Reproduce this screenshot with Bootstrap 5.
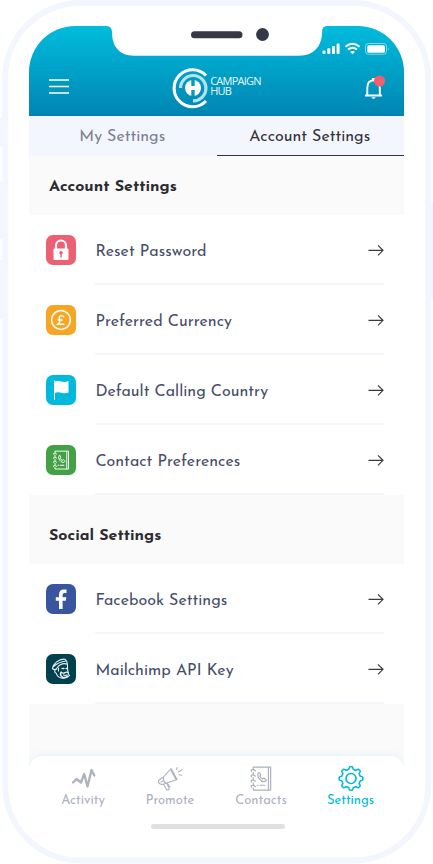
<!DOCTYPE html>
<html lang="en">
<head>
<meta charset="utf-8">
<meta name="viewport" content="width=device-width, initial-scale=1">
<title>Campaign Hub – Account Settings</title>
<link href="https://cdn.jsdelivr.net/npm/bootstrap@5.3.0/dist/css/bootstrap.min.css" rel="stylesheet">
<style>
  body { font-family: "Josefin Sans", Lato, sans-serif; background: #fff; overflow: hidden; }
  svg { display: block; flex: none; }
  .device { width: 433px; height: 864px; padding: 26px 29px 0; }
  .device-frame { left: 0; top: 0; z-index: -1; }
  .screen { width: 375px; height: 804px; border-radius: 46px 46px 0 0; }
  .app-header { height: 90px; background: linear-gradient(#00bcdc, #0085b2); padding: 0 19px 0 20px; }
  .notch { left: 77px; top: 0; }
  .status-icons { left: 293px; top: 16px; }
  .header-row { padding-top: 39px; height: 84px; }
  .brand-name { font: 11px/10px "Open Sans", sans-serif; letter-spacing: -.75px; color: #e8f7fb; font-weight: 400; margin-top: -3px; }
  .settings-tabs { height: 40px; background: #f3f6ff; }
  .settings-tabs .nav-link { color: #7c8090; font-size: 16px; line-height: 18px; padding: 12px 1px 9px 0; border-radius: 0; border-bottom: 1px solid transparent; width: 187.5px; }
  .settings-tabs .nav-link.active { color: #333; border-color: #333; }
  .section-title { height: 59px; background: #fafafa; font-size: 16px; font-weight: 700; color: #2c2c30; padding: 4px 20px 0; margin: 0; }
  .section-title + .list-group + .section-title { height: 69px; padding-top: 14px; }
  .setting { height: 70px; padding: 0 20px 0 17px; color: #464d68; font-size: 16px; }
  .setting-body { height: 70px; margin-left: 19px; border-bottom: 2px solid #f5f6fc; padding-top: 2px; }
  .setting-body span { padding: 3px 0 0 .4px; letter-spacing: .02px; }
  .tail { background: #fafafa; height: 66px; }
  .tab-bar { height: 74px; margin-top: -14px; border-radius: 14px 14px 0 0; box-shadow: 0 -2px 7px #e4f4f7; background: #fff; padding-top: 9px; position: relative; }
  .tab-item { color: #adb1c0; font-size: 13px; line-height: 17px; }
  .tab-item.current { color: #00b8d9; }
  .t-activity { margin-left: 24px; width: 60px; }
  .t-promote { margin-left: 26px; width: 62px; }
  .t-contacts { margin-left: 29px; width: 62px; }
  .t-settings { margin-left: 28.500px; width: 60px; }
  .home-bar { width: 134px; height: 5px; border-radius: 3px; background: #e0e0e0; margin: -6px auto 0; position: relative; left: 1px; }
</style>
<script src="https://cdn.jsdelivr.net/npm/bootstrap@5.3.0/dist/js/bootstrap.bundle.min.js"></script>
</head>
<body>
<svg width="0" height="0" class="position-absolute">
  <symbol id="arrow" viewBox="0 0 16 12"><path d="M.5 6.300H15M10 1.300l5 5-5 5" fill="none" stroke="#3a3a3d" stroke-width="1.15"/></symbol>
  <symbol id="book" viewBox="0 0 24 28">
    <g fill="none" stroke="currentColor" stroke-width="1.25" stroke-linecap="round" stroke-linejoin="round">
      <path d="M4 4V2.2h18V26H4v-2M4 7.5v2M4 13v2M4 18.500v2M19.700 2.500V26"/>
      <path d="M2.200 6.500c-1.500-2 1.800-2.500 4-.5M2.200 12c-1.500-2 1.800-2.500 4-.5M2.200 17.500c-1.500-2 1.800-2.500 4-.5M2.200 23c-1.500-2 1.800-2.500 4-.5"/>
      <path d="M9.500 8.200c-2.500 4 2.500 9.500 6.500 9.100l1.500-1.500-2.400-2.300-1.500 1c-1.300-.6-2.300-1.600-2.800-3l1-1.100-1.200-2.300zM8 21h1m2 0h5"/>
    </g>
  </symbol>
</svg>

<main class="device position-relative">
  <svg class="device-frame position-absolute" width="433" height="864" fill="none">
    <rect x="5.300" y="3" width="423" height="857.500" rx="75" stroke="#f3f6ff" stroke-width="6"/>
    <path d="M1.200 118v29M1.200 181v58M1.200 260v59M432 202v96" stroke="#f3f6ff" stroke-width="2.500"/>
  </svg>

  <div class="screen overflow-hidden">
    <header class="app-header position-relative">
      <svg class="notch position-absolute" width="222" height="31">
        <path d="M0 0H221Q216 0 216 6C216 20 208 29.700 193 29.700H28C13 29.700 6 20 6 6Q6 0 0 0Z" fill="#fff"/>
        <rect x="85" y="5.300" width="51.500" height="7" rx="3.500" fill="#353945"/>
        <circle cx="156.500" cy="8.500" r="6.400" fill="#353945"/>
      </svg>
      <svg class="status-icons position-absolute" width="68" height="14" fill="#fff">
        <rect x=".5" y="8.500" width="3" height="3.500" rx="1"/><rect x="5.300" y="6.300" width="3" height="5.700" rx="1"/><rect x="10" y="4" width="3" height="8" rx="1"/><rect x="14.600" y="1.500" width="3" height="10.500" rx="1"/>
        <path d="M23.500 4.700Q30.500-1 37.500 4.700M26 7.600Q30.500 4 35 7.600" fill="none" stroke="#fff" stroke-width="1.900"/>
        <path d="M28 9.800Q30.500 8 33 9.800L30.500 12.300Z"/>
        <rect x="43.500" y="1.500" width="21" height="10.800" rx="3" fill="none" stroke="#fff" stroke-opacity=".5"/>
        <rect x="45.300" y="3.200" width="17.600" height="7.500" rx="1.500"/>
        <path d="M66.200 5.200q1.500 1.800 0 3.600z" opacity=".6"/>
      </svg>
      <div class="header-row d-flex align-items-center justify-content-between">
        <svg width="20" height="17" stroke="#fff" stroke-width="1.600"><path d="M0 1H20M0 7.500H20M0 14H20"/></svg>
        <div class="d-flex align-items-center">
          <svg width="38" height="42" fill="none">
            <path d="M34 8.500A18.500 18.500 0 1 0 34 34" stroke="#fff" stroke-width="3.100"/>
            <path d="M8.500 21A12.700 12.700 0 1 1 21 33.900" stroke="#b5e1ef" stroke-width="3.200"/>
            <circle cx="21" cy="21" r="8" fill="#fff"/>
            <path d="M21 13v6M21 23v6" stroke="#0699c1" stroke-width="3.400"/>
          </svg>
          <div class="brand-name"><div>CAMPAIGN</div><div>HUB</div></div>
        </div>
        <svg width="21" height="26">
          <path d="M1 20.500H18M3.300 20V13Q3.300 5.500 9.500 5.200Q15.800 5.500 15.800 13V20" fill="none" stroke="#fff" stroke-width="1.900"/>
          <path d="M7.300 22.300h4.400q-2.200 3-4.400 0zM8 5V3h3v2z" fill="#fff"/>
          <circle cx="15.500" cy="6" r="5.600" fill="#ef5f70"/>
        </svg>
      </div>
    </header>

    <nav class="nav settings-tabs flex-nowrap text-center">
      <a class="nav-link" href="#"><span>My Settings</span></a>
      <a class="nav-link active" href="#"><span>Account Settings</span></a>
    </nav>

    <h2 class="section-title d-flex align-items-center">Account Settings</h2>
    <div class="list-group list-group-flush">
      <div class="setting d-flex align-items-center">
        <svg width="30" height="30"><rect width="30" height="30" rx="7" fill="#ed5f72"/><path d="M10 15v-4.500a5 5 0 0 1 10 0V15" fill="none" stroke="#fff" stroke-width="2.200"/><rect x="7.500" y="13.500" width="15" height="11.500" rx="1" fill="#fff"/><path d="M15 22.500v-4" stroke="#ed5f72" stroke-width="1.500"/><circle cx="15" cy="17.800" r="1.800" fill="#ed5f72"/></svg>
        <div class="setting-body flex-grow-1 d-flex align-items-center justify-content-between"><span>Reset Password</span><svg width="16" height="12"><use href="#arrow"/></svg></div>
      </div>
      <div class="setting d-flex align-items-center">
        <svg width="30" height="30"><rect width="30" height="30" rx="7" fill="#f5a623"/><circle cx="15" cy="15" r="9.400" fill="none" stroke="#fff" stroke-width="1.500"/><path d="M18 12.300q-1.300-2.300-3.500-1.400-2 .9-.9 3.400.8 3-1.600 4.900h6.400M11.700 15h5" fill="none" stroke="#fff" stroke-width="1.500"/></svg>
        <div class="setting-body flex-grow-1 d-flex align-items-center justify-content-between"><span>Preferred Currency</span><svg width="16" height="12"><use href="#arrow"/></svg></div>
      </div>
      <div class="setting d-flex align-items-center">
        <svg width="30" height="30"><rect width="30" height="30" rx="7" fill="#00b9db"/><path d="M8.500 5.500V25" stroke="#fff" stroke-width="1"/><path d="M8.500 6.500q3.600-1.200 7 0t7-.5V17.500q-3.400 1.300-7 .2t-7 .3z" fill="#fff"/></svg>
        <div class="setting-body flex-grow-1 d-flex align-items-center justify-content-between"><span>Default Calling Country</span><svg width="16" height="12"><use href="#arrow"/></svg></div>
      </div>
      <div class="setting d-flex align-items-center">
        <svg width="30" height="30" color="#fff"><rect width="30" height="30" rx="7" fill="#43a047"/><use href="#book" x="6" y="4.500" width="18" height="21"/></svg>
        <div class="setting-body flex-grow-1 d-flex align-items-center justify-content-between"><span>Contact Preferences</span><svg width="16" height="12"><use href="#arrow"/></svg></div>
      </div>
    </div>

    <h2 class="section-title d-flex align-items-center">Social Settings</h2>
    <div class="list-group list-group-flush">
      <div class="setting d-flex align-items-center">
        <svg width="30" height="30"><rect width="30" height="30" rx="7" fill="#3a55a0"/><path d="M13 25v-8.300H9.800v-3.400H13v-2.600q0-5.200 5-5.200h2.500v3.400h-2q-1.900 0-1.900 2v2.400h3.700l-.5 3.400h-3.200V25z" fill="#fff"/></svg>
        <div class="setting-body flex-grow-1 d-flex align-items-center justify-content-between"><span>Facebook Settings</span><svg width="16" height="12"><use href="#arrow"/></svg></div>
      </div>
      <div class="setting d-flex align-items-center">
        <svg width="30" height="30"><rect width="30" height="30" rx="7" fill="#00404f"/>
          <g fill="none" stroke="#e2edef" stroke-width="1.100" stroke-linecap="round" stroke-linejoin="round"><path d="M6.500 14.500C7 10 13 4.500 19 5.200q2.200 1.500 2.400 5C17 8.700 13.500 10.500 11 14q-2 3-4.500.5zM7.500 12.500Q12.500 8 20 7"/><path d="M10.800 15c-2.500.3-3 3.500-.5 4.300 1.500 5.500 9.500 6.700 13.200 2.200-1.500-1-1.300-2.500-1.300-3.500-1-1.500-.5-4.500-.8-7.500M12.500 14v3"/><path d="M15 18.300q-1.500 3 1.800 5.200 3 .5 5-1.500" stroke-width="1.600"/><path d="M15 18.300q2 1.500 4 .3t3.200.2M16 14.500h2M20 14.500h1M17.500 21q2 .8 3.500 0" stroke-width="1.300"/></g></svg>
        <div class="setting-body flex-grow-1 d-flex align-items-center justify-content-between"><span>Mailchimp API Key</span><svg width="16" height="12"><use href="#arrow"/></svg></div>
      </div>
    </div>
    <div class="tail"></div>

    <nav class="tab-bar d-flex text-center">
      <div class="tab-item t-activity d-flex flex-column align-items-center">
        <svg width="26" height="27"><path d="M3 17.500l3.500-3.500 4.500 3.500 3.200-8.500 3.300 12.500 4-16.500 2.800 5.500" fill="none" stroke="currentColor" stroke-width="2.300" stroke-linejoin="round" stroke-linecap="round"/></svg>
        <span>Activity</span>
      </div>
      <div class="tab-item t-promote d-flex flex-column align-items-center">
        <svg width="26" height="27" fill="none" stroke="currentColor" stroke-width="1.100" stroke-linejoin="round" stroke-linecap="round"><path d="M1.500 15.500L6.500 12 14 3.500l6.200 11L9 18.300l-4 1.200q-4-.7-3.500-4zM6.500 12q-.5 4 2.500 6.300M14 5.500l5 9M6.500 19.200l3 5.300q1.500 1.200 2.800-.4L9.800 18M10 18l3 4M15.500 8.500q2 .3 1.800 2.800M19.500 4.500l.7-2M21.500 6.800l3.500-2M22 9.700l2.800.5M4 17l2-1"/></svg>
        <span>Promote</span>
      </div>
      <div class="tab-item t-contacts d-flex flex-column align-items-center">
        <svg width="24" height="27"><use href="#book"/></svg>
        <span>Contacts</span>
      </div>
      <div class="tab-item current t-settings d-flex flex-column align-items-center">
        <svg width="26" height="27" fill="none" stroke="currentColor" stroke-width="1.600" stroke-linejoin="round"><circle cx="13" cy="13.500" r="5"/><path d="M10.800 4.200Q11.300 1.700 11.700 1.700h2.600q.4 0 .9 2.500l2.800 1.200q2.200-1.500 2.500-1.200l1.800 1.800q.3.300-1.200 2.500l1.200 2.800q2.500.5 2.500.9v2.600q0 .4-2.500.9l-1.200 2.800q1.500 2.200 1.200 2.500l-1.800 1.800q-.3.300-2.500-1.200l-2.800 1.200q-.5 2.500-.9 2.500h-2.600q-.4 0-.9-2.500L8 21.600q-2.200 1.500-2.500 1.200L3.700 21q-.3-.3 1.200-2.500l-1.200-2.800q-2.500-.5-2.500-.9v-2.600q0-.4 2.500-.9l1.200-2.800Q3.400 6.300 3.700 6l1.800-1.800q.3-.3 2.500 1.200z"/></svg>
        <span>Settings</span>
      </div>
    </nav>
  </div>
  <div class="home-bar"></div>
</main>
</body>
</html>
